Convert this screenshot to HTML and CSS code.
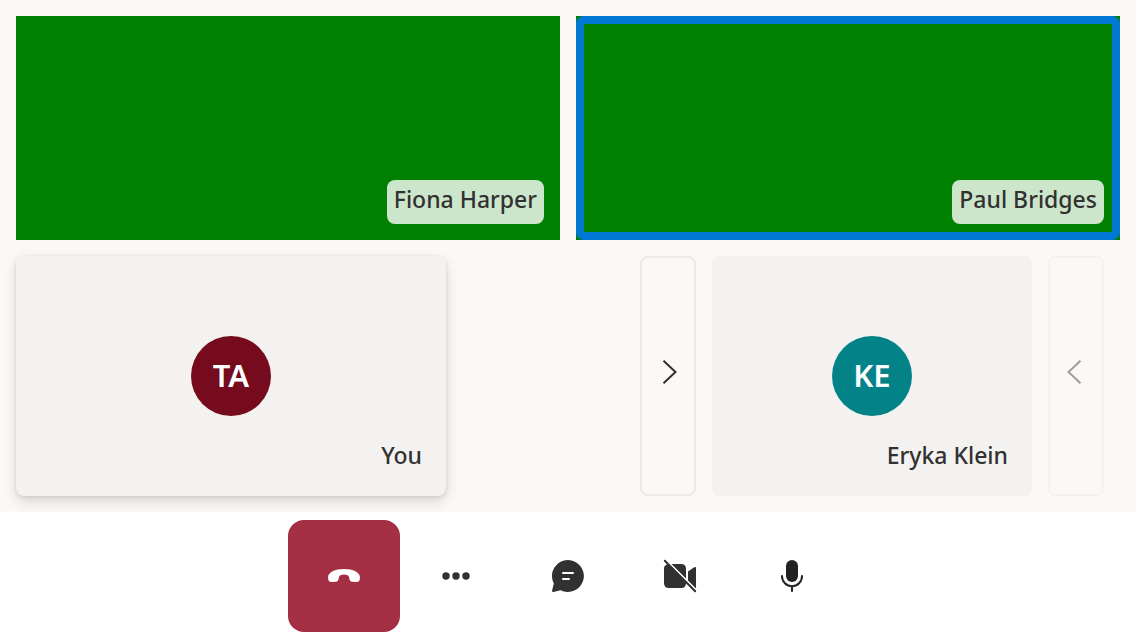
FILE: index.html
```html
<!DOCTYPE html>
<html lang="en">
<head>
<meta charset="utf-8">
<meta name="viewport" content="width=device-width, initial-scale=1">
<title>Call</title>
<link rel="stylesheet" href="styles.css">
</head>
<body>
<div class="call">
  <main class="stage">
    <section class="videos" aria-label="Video participants">
      <article class="video"><span class="label">Fiona Harper</span></article>
      <article class="video speaking"><span class="label">Paul Bridges</span></article>
    </section>
    <section class="strip" aria-label="Participants">
      <article class="tile local">
        <div class="avatar maroon">TA</div>
        <span class="name">You</span>
      </article>
      <div class="gallery">
        <button class="page" type="button" aria-label="Next page">
          <svg class="chevron" viewBox="0 0 24 24"><path d="M5.500 0.700 17.500 12 5.500 23.300"/></svg>
        </button>
        <article class="tile remote">
          <div class="avatar teal">KE</div>
          <span class="name">Eryka Klein</span>
        </article>
        <button class="page" type="button" aria-label="Previous page" disabled>
          <svg class="chevron" viewBox="0 0 24 24"><path d="M18.500 0.700 6.500 12 18.500 23.300"/></svg>
        </button>
      </div>
    </section>
  </main>
  <footer class="controls">
    <button class="control hangup" type="button" aria-label="Leave call">
      <svg class="icon" viewBox="0 0 40 40"><path d="M20 13C29 13 36 16.200 36 21.500C36 25 34.600 26.300 31.800 26L28.200 25.800C26 25.500 25.500 24 25.200 21.700C24.900 19.200 23 18.500 20 18.500S15.100 19.200 14.800 21.700C14.500 24 14 25.500 11.800 25.800L8.200 26C5.400 26.300 4 25 4 21.500C4 16.200 11 13 20 13Z"/></svg>
    </button>
    <button class="control" type="button" aria-label="More options">
      <svg class="icon" viewBox="0 0 40 40"><circle cx="10" cy="20" r="3.700"/><circle cx="20" cy="20" r="3.700"/><circle cx="30" cy="20" r="3.700"/></svg>
    </button>
    <button class="control" type="button" aria-label="Chat">
      <svg class="icon" viewBox="0 0 40 40"><path fill-rule="evenodd" d="M20 4A16 16 0 1 1 12.500 34.200L5.500 35.900Q3.800 36.200 4.100 34.500L5.800 27.500A16 16 0 0 1 20 4ZM15 16A1 1 0 0 0 15 18H25A1 1 0 0 0 25 16ZM15 22A1 1 0 0 0 15 24H21A1 1 0 0 0 21 22Z"/></svg>
    </button>
    <button class="control" type="button" aria-label="Turn camera on">
      <svg class="icon" viewBox="0 0 40 40"><path d="M4 12.500Q4 9.500 7.300 8.300L8.500 8.500L26 26V27.500Q25.700 32 21 32H9Q4 32 4 27ZM11.500 8H21Q26 8 26 13V22.500ZM28 15.500 34.200 11.200Q36 10.300 36 12V32.500L28 24.500Z"/><path class="slash" d="M4.800 4.800 35.200 35.200"/></svg>
    </button>
    <button class="control" type="button" aria-label="Mute">
      <svg class="icon mic" viewBox="0 0 40 40"><rect x="14" y="4" width="12" height="22" rx="6"/><path class="slash" d="M10 20V20.200A10 10 0 0 0 30 20.200V20M20 30.200V35"/></svg>
    </button>
  </footer>
</div>
</body>
</html>
```
FILE: styles.css
```css
*, *::before, *::after { box-sizing: border-box; }

body {
  margin: 0;
  font-family: "Noto Sans", "Open Sans", sans-serif;
  font-weight: 500;
  color: #323130;
  background: #fff;
}

button {
  margin: 0;
  padding: 0;
  font: inherit;
  color: inherit;
  background: none;
}

.call {
  display: flex;
  flex-direction: column;
  min-height: 100vh;
}

.stage {
  flex: 1;
  display: flex;
  flex-direction: column;
  gap: 16px;
  padding: 16px;
  overflow: hidden;
  background: #faf9f8;
}

.videos {
  flex: 1;
  display: grid;
  grid-template-columns: 1fr 1fr;
  gap: 16px;
}

.video {
  position: relative;
  display: flex;
  align-items: flex-end;
  justify-content: flex-end;
  min-height: 224px;
  padding: 16px;
  background: #008000;
}

.speaking::after {
  content: "";
  position: absolute;
  inset: 0;
  border: 8px solid #0078d4;
  border-radius: 8px;
}

.label {
  padding: 3px 7px 9px;
  border-radius: 8px;
  font-size: 23px;
  line-height: 32px;
  background: rgba(255, 255, 255, 0.8);
}

.strip {
  display: flex;
  justify-content: space-between;
  height: 240px;
  padding-right: 16px;
}

.tile {
  display: grid;
  grid-template-rows: 80px 80px 80px;
  justify-items: center;
  border-radius: 8px;
  background: #f3f2f1;
}

.local {
  width: 430px;
  box-shadow: 0 6px 14px rgba(0, 0, 0, 0.13), 0 1px 4px rgba(0, 0, 0, 0.11);
}

.remote { width: 320px; }

.avatar {
  grid-row: 2;
  width: 80px;
  height: 80px;
  border-radius: 50%;
  font-size: 31px;
  font-weight: 600;
  line-height: 78px;
  text-align: center;
  color: #fff;
}

.maroon { background: #750b1c; }
.teal { background: #038387; }

.name {
  grid-row: 3;
  justify-self: end;
  align-self: end;
  padding: 0 24px 25px;
  font-size: 23px;
  line-height: 32px;
}

.gallery {
  display: flex;
  gap: 16px;
}

.page {
  display: flex;
  align-items: center;
  justify-content: center;
  width: 56px;
  padding-bottom: 8px;
  border: 2px solid #edebe9;
  border-radius: 8px;
}

.page:disabled {
  color: #a19f9d;
  border-color: #f3f2f1;
}

.chevron {
  width: 24px;
  height: 24px;
  margin-left: 4px;
  fill: none;
  stroke: currentColor;
  stroke-width: 2;
}

.page:disabled .chevron { margin: 0 4px 0 0; }

.controls {
  display: flex;
  justify-content: center;
  padding: 8px;
  background: #fff;
}

.control {
  display: grid;
  place-items: center;
  width: 112px;
  height: 112px;
  border: 0;
  border-radius: 16px;
}

.hangup {
  color: #fff;
  background: #a42e43;
}

.icon {
  width: 40px;
  height: 40px;
  fill: currentColor;
}

.mic { color: #212121; }

.slash {
  fill: none;
  stroke: currentColor;
  stroke-width: 2;
  stroke-linecap: round;
}
```
